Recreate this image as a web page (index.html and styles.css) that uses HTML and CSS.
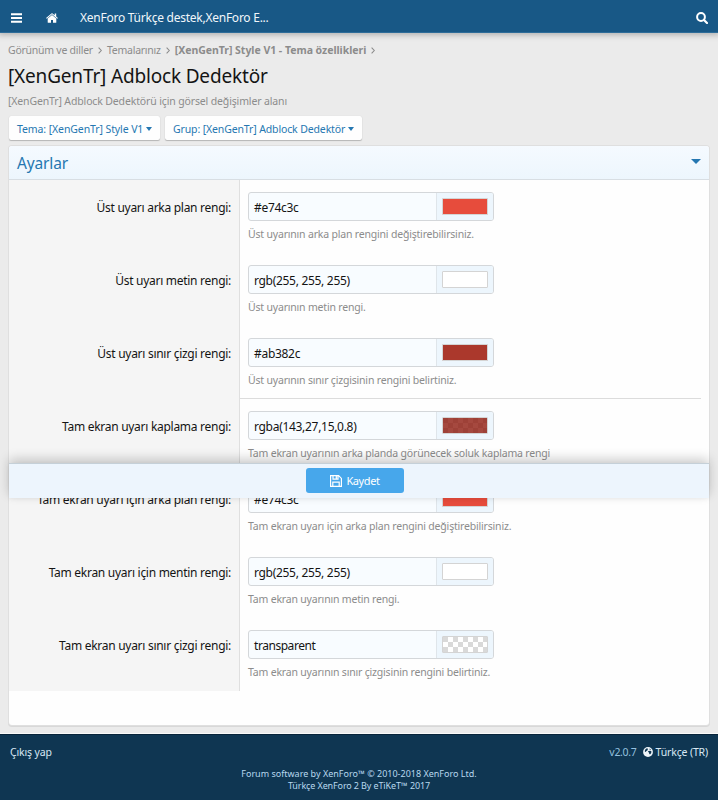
FILE: index.html
```html
<!DOCTYPE html>
<html lang="tr">
<head>
<meta charset="utf-8">
<title>[XenGenTr] Adblock Dedektör</title>
<link rel="stylesheet" href="styles.css">
</head>
<body>
<header class="topbar">
  <svg class="icon-menu" viewBox="0 0 11 10"><path d="M0 1.2h11M0 5h11M0 8.8h11" stroke="#fff" stroke-width="2"/></svg>
  <svg class="icon-home" viewBox="0 0 12 10"><path fill="#fff" d="M6 1.9 1.7 5.5V9.3q0 .5.5.5H5V6.9h2v2.9h2.8q.5 0 .5-.5V5.5zM11.9 5 10.2 3.5V.6H8.7v1.7L6.6.5Q6 .1 5.4.5L.1 5l.6.7L6 1.2l5.3 4.5z"/></svg>
  <span class="topbar-title">XenForo Türkçe destek,XenForo E...</span>
  <svg class="icon-search" viewBox="0 0 12 12"><circle cx="5" cy="5" r="3.9" fill="none" stroke="#fff" stroke-width="2"/><path d="m8 8 3 3" stroke="#fff" stroke-width="2.2" stroke-linecap="round"/></svg>
</header>
<main class="page">
  <nav class="crumbs">
    <span>Görünüm ve diller</span><svg class="chev" viewBox="0 0 4 7"><path d="M.6.6 3.3 3.5.6 6.4"/></svg>
    <span>Temalarınız</span><svg class="chev" viewBox="0 0 4 7"><path d="M.6.6 3.3 3.5.6 6.4"/></svg>
    <b>[XenGenTr] Style V1 - Tema özellikleri</b><svg class="chev" viewBox="0 0 4 7"><path d="M.6.6 3.3 3.5.6 6.4"/></svg>
  </nav>
  <h1>[XenGenTr] Adblock Dedektör</h1>
  <p class="desc">[XenGenTr] Adblock Dedektörü için görsel değişimler alanı</p>
  <div class="menus">
    <a class="menu theme"><span>Tema: [XenGenTr] Style V1</span><i class="caret"></i></a>
    <a class="menu group"><span>Grup: [XenGenTr] Adblock Dedektör</span><i class="caret"></i></a>
  </div>
  <section class="card">
    <h2><span>Ayarlar</span><i class="caret big"></i></h2>
    <dl class="row"><dt>Üst uyarı arka plan rengi:</dt><dd><div class="field"><span class="value">#e74c3c</span><span class="pick"><i class="swatch red"></i></span></div><p>Üst uyarının arka plan rengini değiştirebilirsiniz.</p></dd></dl>
    <dl class="row"><dt>Üst uyarı metin rengi:</dt><dd><div class="field"><span class="value">rgb(255, 255, 255)</span><span class="pick"><i class="swatch white"></i></span></div><p>Üst uyarının metin rengi.</p></dd></dl>
    <dl class="row divided"><dt>Üst uyarı sınır çizgi rengi:</dt><dd><div class="field"><span class="value">#ab382c</span><span class="pick"><i class="swatch brick"></i></span></div><p>Üst uyarının sınır çizgisinin rengini belirtiniz.</p></dd></dl>
    <dl class="row"><dt>Tam ekran uyarı kaplama rengi:</dt><dd><div class="field"><span class="value">rgba(143,27,15,0.8)</span><span class="pick"><i class="swatch veil"></i></span></div><p>Tam ekran uyarının arka planda görünecek soluk kaplama rengi</p></dd></dl>
    <dl class="row"><dt>Tam ekran uyarı için arka plan rengi:</dt><dd><div class="field"><span class="value">#e74c3c</span><span class="pick"><i class="swatch red"></i></span></div><p>Tam ekran uyarı için arka plan rengini değiştirebilirsiniz.</p></dd></dl>
    <dl class="row"><dt>Tam ekran uyarı için mentin rengi:</dt><dd><div class="field"><span class="value">rgb(255, 255, 255)</span><span class="pick"><i class="swatch white"></i></span></div><p>Tam ekran uyarının metin rengi.</p></dd></dl>
    <dl class="row"><dt>Tam ekran uyarı sınır çizgi rengi:</dt><dd><div class="field"><span class="value tight">transparent</span><span class="pick"><i class="swatch clear"></i></span></div><p>Tam ekran uyarının sınır çizgisinin rengini belirtiniz.</p></dd></dl>
    <div class="savebar">
      <button class="save"><svg viewBox="0 0 12 12"><path d="M.6.6h8L11.4 3.4v8H.6zM3 .6v3.6h5V.6M2.8 11.4V7.2h6.4v4.2M6.3 1.2v2.2" fill="none" stroke="#fff" stroke-width="1.2"/></svg><span>Kaydet</span></button>
    </div>
  </section>
</main>
<footer>
  <div class="footrow"><span class="logout">Çıkış yap</span><span class="version">v2.0.7</span>
    <svg viewBox="0 0 10 10"><circle cx="5" cy="5" r="4.9" fill="#eef5fa"/><path fill="#0f3652" d="m3.2 1.6 1.6-.2.3.9-.8.6.2.7-1.1.4-.7 1-.9-.4.2-1.6zM5.3 3.9l2.1-.2 1.1.9-.4 1.6-1.1 1.2-.8-.6-.2-1.2-.9-.6zM6.6 1.6l1.3.9-.5.5-.9-.5z"/></svg>
    <span>Türkçe (TR)</span></div>
  <p class="copy">Forum software by XenForo™ © 2010-2018 XenForo Ltd.<br><span class="edition">Türkçe XenForo 2 By eTiKeT™ 2017</span></p>
</footer>
</body>
</html>
```

FILE: styles.css
```css
* { box-sizing: border-box; }
body { margin: 0; background: #ebebeb; color: #141414; font-family: "Noto Sans", "Open Sans", sans-serif; font-size: 12px; display: flex; flex-direction: column; height: 800px; overflow: hidden; }
h1, h2, p, dl, dd { margin: 0; font-weight: 400; }
svg { display: block; flex: none; }
span, b, a { white-space: nowrap; }

.topbar { height: 33px; flex: none; background: #185886; border-bottom: 1px solid #2d6c99; box-shadow: 0 0 6px 2px rgba(0,0,0,.25); display: flex; align-items: center; padding: 3px 10px 0 11px; color: #f0f6fa; }
.icon-menu { width: 11px; height: 10px; margin-right: 25px; }
.icon-home { width: 12px; height: 10px; margin: 0 22px 0 -1px; }
.topbar-title { font-size: 12px; letter-spacing: -.25px; flex: 1; }
.icon-search { width: 12px; height: 12px; }

.page { padding: 9px 9px 0; height: 701px; flex: none; border-bottom: 1px solid #fafafa; }
.crumbs { height: 15px; margin-left: -1px; display: flex; align-items: center; color: #8c8c8c; font-size: 10.5px; letter-spacing: -.25px; }
.crumbs b { letter-spacing: -.03px; }
.chev { width: 4px; height: 7px; margin: 1px 5px 0; fill: none; stroke: #8c8c8c; stroke-width: 1.1; }
h1 { height: 36px; margin-left: -1px; line-height: 39px; font-size: 19px; letter-spacing: -.17px; }
.desc { height: 16px; margin-left: -1px; line-height: 16px; font-size: 10.5px; letter-spacing: -.14px; color: #8c8c8c; }
.menus { display: flex; gap: 5px; margin-top: 7px; }
.menu { height: 24px; background: #fefefe; border-radius: 2px; box-shadow: 0 1px 1px rgba(0,0,0,.22), 0 0 1px rgba(0,0,0,.15); padding: 1px 8px 0; display: flex; align-items: center; justify-content: space-between; color: #2577b1; font-size: 10.5px; letter-spacing: -.1px; }
.theme { width: 151px; }
.group { width: 197px; letter-spacing: -.13px; }
.caret { border: 3px solid transparent; border-top: 4px solid #2577b1; border-bottom: 0; }
.caret.big { border-width: 5px 5px 0; margin-top: -2px; }

.card { position: relative; margin-top: 6px; height: 579px; background: #fefefe; border-radius: 3px; box-shadow: 0 0 0 1px #dfdfdf, 0 1px 0 1px #d8d8d8; }
h2 { height: 34px; border-bottom: 1px solid #d8dee3; border-radius: 3px 3px 0 0; background: linear-gradient(#f5faff, #edf6fd); color: #2577b1; font-size: 15.5px; letter-spacing: -.15px; display: flex; align-items: center; justify-content: space-between; padding: 0 8px; }
.row { height: 73px; display: flex; }
dt { width: 231px; flex: none; background: #f5f5f5; border-right: 1px solid #dfdfdf; padding: 18px 8px 0 0; line-height: 20px; font-size: 12px; letter-spacing: -.28px; text-align: right; white-space: nowrap; }
dd { flex: 1; padding: 12px 0 0 8px; margin-right: 8px; }
.divided dd { border-bottom: 1px solid #dcdcdc; }
.field { width: 246px; height: 29px; border: 1px solid #d4d7da; border-radius: 3px; background: #f8fcff; display: flex; overflow: hidden; }
.value { flex: 1; padding-left: 5px; line-height: 29px; font-size: 12px; letter-spacing: -.3px; }
.value.tight { letter-spacing: -.45px; }
.pick { width: 57px; background: #edf6fd; border-left: 1px solid #dfe5ea; padding: 5px; }
.swatch { display: block; width: 46px; height: 17px; border: 1px solid #d4d4d4; border-radius: 1px; background: #fff; }
.red { background: #e74c3c; }
.brick { background: #ab382c; }
.clear { background: repeating-conic-gradient(#fff 0 25%, #d9d9d9 0 50%) 0 0 / 10px 10px; }
.veil { background: linear-gradient(rgba(143,27,15,.8), rgba(143,27,15,.8)), repeating-conic-gradient(#fff 0 25%, #d9d9d9 0 50%) 0 0 / 10px 10px; }
dd p { margin-top: 5px; line-height: 16px; font-size: 10.5px; letter-spacing: -.19px; color: #8c8c8c; white-space: nowrap; }

.savebar { position: absolute; left: 0; right: 0; top: 317px; height: 35px; background: #edf5fd; border-top: 1px solid #c5d0d8; box-shadow: 0 -4px 12px rgba(0,0,0,.2), 0 1px 4px rgba(0,0,0,.04); display: flex; justify-content: center; padding-top: 4px; }
.save { width: 98px; height: 25px; margin-right: 8px; border: 0; border-radius: 3px; background: #47a7eb; color: #fff; font: 11px "Noto Sans", sans-serif; letter-spacing: -.4px; display: flex; align-items: center; justify-content: center; gap: 4px; padding: 0; }
.save svg { width: 12px; height: 12px; }

footer { flex: 1; background: #0f3652; color: #d8e8f4; border-top: 1px solid #08243a; }
.footrow { display: flex; align-items: center; height: 33px; padding: 0 10px; font-size: 10.5px; letter-spacing: -.15px; }
.logout { flex: 1; }
.version { color: #94c0df; letter-spacing: -.3px; }
.footrow svg { width: 10px; height: 10px; margin: 0 3px 0 6px; }
.copy { text-align: center; font-size: 9px; line-height: 12px; color: #b8d8ee; }
.edition { letter-spacing: -.12px; }
```
